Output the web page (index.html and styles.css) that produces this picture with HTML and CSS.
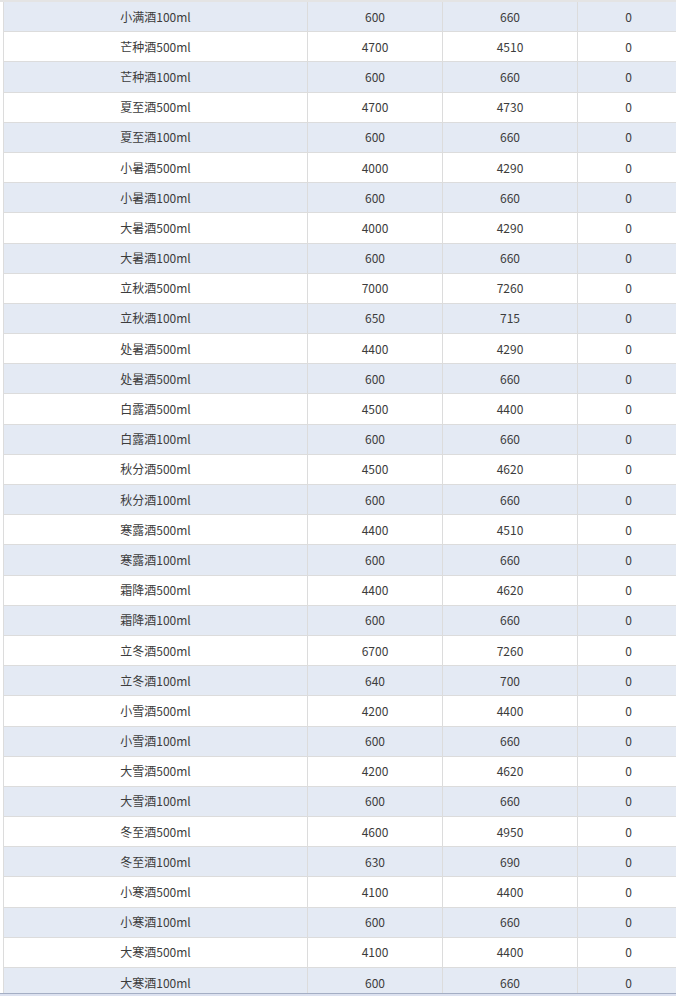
FILE: index.html
```html
<!DOCTYPE html>
<html lang="zh">
<head>
<meta charset="utf-8">
<link rel="stylesheet" href="styles.css">
</head>
<body>
<div class="page">
  <div class="topbar"></div>
  <div class="viewport">
    <div class="table">
      <div class="row alt"><div class="cell">小满酒100ml</div><div class="cell">600</div><div class="cell">660</div><div class="cell">0</div></div>
      <div class="row"><div class="cell">芒种酒500ml</div><div class="cell">4700</div><div class="cell">4510</div><div class="cell">0</div></div>
      <div class="row alt"><div class="cell">芒种酒100ml</div><div class="cell">600</div><div class="cell">660</div><div class="cell">0</div></div>
      <div class="row"><div class="cell">夏至酒500ml</div><div class="cell">4700</div><div class="cell">4730</div><div class="cell">0</div></div>
      <div class="row alt"><div class="cell">夏至酒100ml</div><div class="cell">600</div><div class="cell">660</div><div class="cell">0</div></div>
      <div class="row"><div class="cell">小暑酒500ml</div><div class="cell">4000</div><div class="cell">4290</div><div class="cell">0</div></div>
      <div class="row alt"><div class="cell">小暑酒100ml</div><div class="cell">600</div><div class="cell">660</div><div class="cell">0</div></div>
      <div class="row"><div class="cell">大暑酒500ml</div><div class="cell">4000</div><div class="cell">4290</div><div class="cell">0</div></div>
      <div class="row alt"><div class="cell">大暑酒100ml</div><div class="cell">600</div><div class="cell">660</div><div class="cell">0</div></div>
      <div class="row"><div class="cell">立秋酒500ml</div><div class="cell">7000</div><div class="cell">7260</div><div class="cell">0</div></div>
      <div class="row alt"><div class="cell">立秋酒100ml</div><div class="cell">650</div><div class="cell">715</div><div class="cell">0</div></div>
      <div class="row"><div class="cell">处暑酒500ml</div><div class="cell">4400</div><div class="cell">4290</div><div class="cell">0</div></div>
      <div class="row alt"><div class="cell">处暑酒500ml</div><div class="cell">600</div><div class="cell">660</div><div class="cell">0</div></div>
      <div class="row"><div class="cell">白露酒500ml</div><div class="cell">4500</div><div class="cell">4400</div><div class="cell">0</div></div>
      <div class="row alt"><div class="cell">白露酒100ml</div><div class="cell">600</div><div class="cell">660</div><div class="cell">0</div></div>
      <div class="row"><div class="cell">秋分酒500ml</div><div class="cell">4500</div><div class="cell">4620</div><div class="cell">0</div></div>
      <div class="row alt"><div class="cell">秋分酒100ml</div><div class="cell">600</div><div class="cell">660</div><div class="cell">0</div></div>
      <div class="row"><div class="cell">寒露酒500ml</div><div class="cell">4400</div><div class="cell">4510</div><div class="cell">0</div></div>
      <div class="row alt"><div class="cell">寒露酒100ml</div><div class="cell">600</div><div class="cell">660</div><div class="cell">0</div></div>
      <div class="row"><div class="cell">霜降酒500ml</div><div class="cell">4400</div><div class="cell">4620</div><div class="cell">0</div></div>
      <div class="row alt"><div class="cell">霜降酒100ml</div><div class="cell">600</div><div class="cell">660</div><div class="cell">0</div></div>
      <div class="row"><div class="cell">立冬酒500ml</div><div class="cell">6700</div><div class="cell">7260</div><div class="cell">0</div></div>
      <div class="row alt"><div class="cell">立冬酒100ml</div><div class="cell">640</div><div class="cell">700</div><div class="cell">0</div></div>
      <div class="row"><div class="cell">小雪酒500ml</div><div class="cell">4200</div><div class="cell">4400</div><div class="cell">0</div></div>
      <div class="row alt"><div class="cell">小雪酒100ml</div><div class="cell">600</div><div class="cell">660</div><div class="cell">0</div></div>
      <div class="row"><div class="cell">大雪酒500ml</div><div class="cell">4200</div><div class="cell">4620</div><div class="cell">0</div></div>
      <div class="row alt"><div class="cell">大雪酒100ml</div><div class="cell">600</div><div class="cell">660</div><div class="cell">0</div></div>
      <div class="row"><div class="cell">冬至酒500ml</div><div class="cell">4600</div><div class="cell">4950</div><div class="cell">0</div></div>
      <div class="row alt"><div class="cell">冬至酒100ml</div><div class="cell">630</div><div class="cell">690</div><div class="cell">0</div></div>
      <div class="row"><div class="cell">小寒酒500ml</div><div class="cell">4100</div><div class="cell">4400</div><div class="cell">0</div></div>
      <div class="row alt"><div class="cell">小寒酒100ml</div><div class="cell">600</div><div class="cell">660</div><div class="cell">0</div></div>
      <div class="row"><div class="cell">大寒酒500ml</div><div class="cell">4100</div><div class="cell">4400</div><div class="cell">0</div></div>
      <div class="row alt"><div class="cell">大寒酒100ml</div><div class="cell">600</div><div class="cell">660</div><div class="cell">0</div></div>
    </div>
  </div>
  <div class="footer"></div>
</div>
</body>
</html>
```

FILE: styles.css
```css
html, body {
  margin: 0;
  padding: 0;
  background: #ffffff;
  overflow: hidden;
}

.page {
  width: 676px;
  height: 996px;
  display: flex;
  flex-direction: column;
  overflow: hidden;
}

.topbar {
  height: 2px;
  flex: 0 0 2px;
  background: #e4e4e4;
}

.viewport {
  flex: 0 0 991px;
  height: 991px;
  overflow: hidden;
  padding-left: 3px;
}

.table {
  width: 680px;
  border-left: 1px solid #dcdcdc;
  font-family: "Noto Sans CJK SC", "Noto Sans", sans-serif;
  font-size: 12px;
  color: #3c3c3c;
}

.row {
  display: grid;
  grid-template-columns: 304px 135px 135px 101px;
  height: 30.19px;
  box-sizing: border-box;
  border-bottom: 1px solid #dcdcdc;
  background: #ffffff;
}

.row.alt {
  background: #e4eaf4;
}

.cell {
  display: flex;
  align-items: center;
  justify-content: center;
  border-right: 1px solid #dcdcdc;
  white-space: nowrap;
  line-height: 1;
}

.cell:last-child {
  border-right: none;
}

.footer {
  flex: 0 0 3px;
  border-top: 1px solid #a4aec4;
  background: #dde2f0;
  box-sizing: border-box;
}
```
